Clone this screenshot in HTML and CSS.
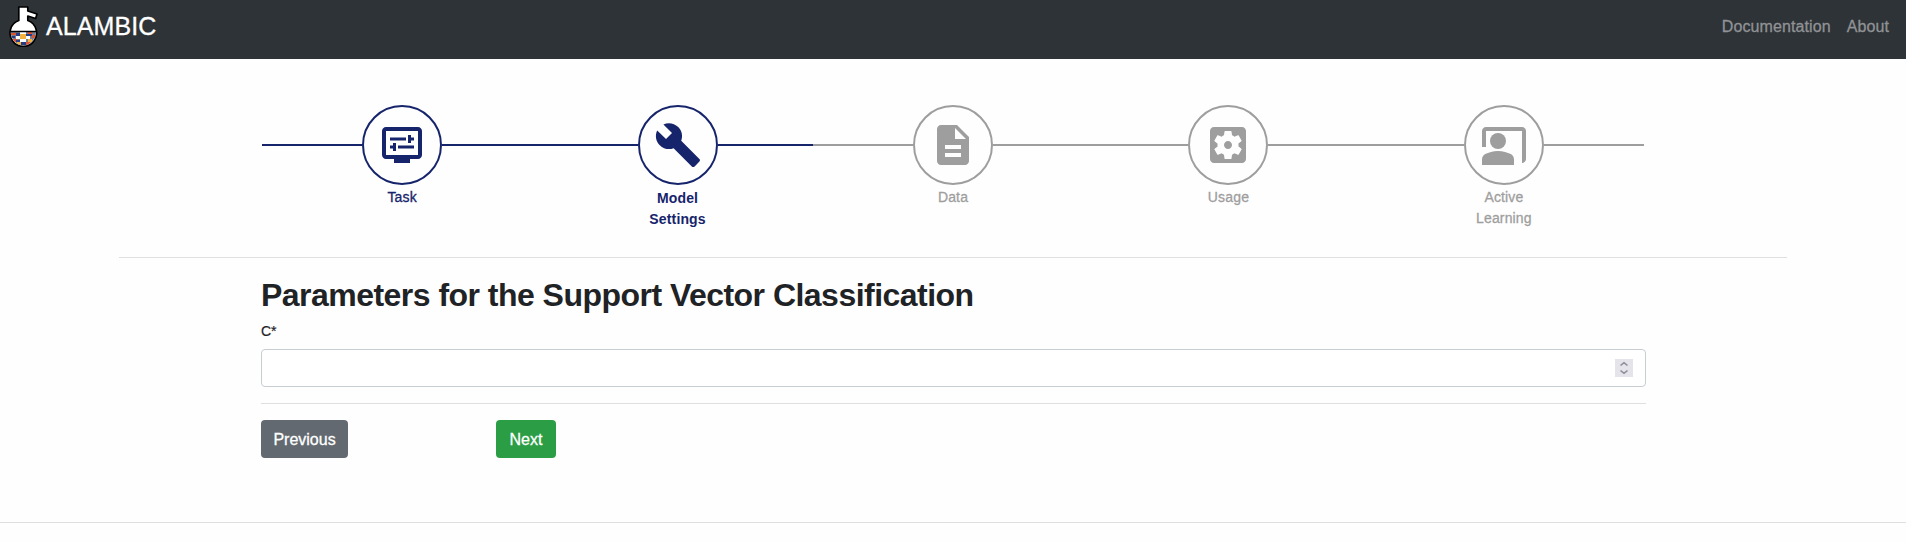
FILE: index.html
```html
<!DOCTYPE html>
<html lang="en">
<head>
<meta charset="utf-8">
<title>ALAMBIC</title>
<link rel="stylesheet" href="styles.css">
</head>
<body>
<nav class="navbar">
  <a class="brand">
    <svg class="logo" viewBox="0 0 30 42" width="30" height="42">
      <path d="M10.800 2h9v4l9.200 3-1.400 4.500-7.800-2.500v4.500a13.300 13.300 0 1 1-9 0z" fill="#fff" stroke="#000" stroke-width="1.700" stroke-linejoin="round"/>
      <clipPath id="bowl"><path d="M2.800 26.500h25a12.500 13.700 0 0 1-25 0z"/></clipPath>
      <g clip-path="url(#bowl)">
        <path fill="#777c8c" d="M1 26h28v16H1z"/>
        <path fill="#fff" d="M12 26h6v3h-6zM8 31h5v3H8zM18 31h4v3h-4zM12 34h6v3h-6z"/>
        <path fill="#e0522f" d="M3 28h5v2H3zM20 27h4v2h-4zM5 34h4v3H5zM18 37h4v3h-4zM24 30h3v3h-3z"/>
        <path fill="#f3b13e" d="M12 29h6v5h-6zM20 34h4v3h-4zM9 37h4v3H9z"/>
        <path fill="#263d85" d="M8 28h4v3H8zM3 31h4v2H3zM18 29h6v2h-6zM8 35h4v2H8zM13 37h5v3h-5z"/>
      </g>
      <path d="M2 26.500h26.500" stroke="#000" stroke-width="1.500"/>
    </svg>
    <span class="brand-name">ALAMBIC</span>
  </a>
  <div class="nav-links"><a class="doc">Documentation</a><a class="about">About</a></div>
</nav>
<main class="container">
  <div class="stepper">
    <span class="line end done"></span>
    <div class="step done">
      <div class="circle"><svg class="icon" viewBox="0 0 24 24"><path fill-rule="evenodd" d="M20 3H4c-1.100 0-2 .9-2 2v12c0 1.100.9 2 2 2h4v2h8v-2h4c1.100 0 2-.9 2-2V5c0-1.100-.9-2-2-2zM20 17H4V5h16z"/><path d="M6 8.250h8v1.500H6zM16.500 9.750H18v-1.500h-1.500V7H15v4h1.500zM10 12.250h8v1.500h-8zM7.500 15H9v-4H7.500v1.250H6v1.500h1.500z"/></svg></div>
      <div class="label">Task</div>
    </div>
    <span class="line done"></span>
    <div class="step done current">
      <div class="circle"><svg class="icon" viewBox="0 0 24 24"><path d="M22.700 19l-9.100-9.100c.9-2.300.4-5-1.500-6.900-2-2-5-2.400-7.400-1.300L9 6 6 9 1.600 4.700C.4 7.100.9 10.100 2.900 12.100c1.900 1.900 4.600 2.400 6.900 1.500l9.100 9.100c.4.4 1 .4 1.400 0l2.300-2.300c.5-.4.5-1.100.1-1.400z"/></svg></div>
      <div class="label">Model Settings</div>
    </div>
    <span class="line half"></span>
    <div class="step">
      <div class="circle"><svg class="icon" viewBox="0 0 24 24"><path d="M14 2H6c-1.100 0-1.990.9-1.990 2L4 20c0 1.100.89 2 1.990 2H18c1.100 0 2-.9 2-2V8l-6-6zm2 16H8v-2h8v2zm0-4H8v-2h8v2zm-3-5V3.500L18.500 9H13z"/></svg></div>
      <div class="label">Data</div>
    </div>
    <span class="line"></span>
    <div class="step">
      <div class="circle"><svg class="icon" viewBox="0 0 24 24"><path d="M12 10c-1.100 0-2 .9-2 2s.9 2 2 2 2-.9 2-2-.9-2-2-2zm7-7H5c-1.110 0-2 .9-2 2v14c0 1.100.89 2 2 2h14c1.110 0 2-.9 2-2V5c0-1.100-.89-2-2-2zm-1.750 9c0 .23-.02.46-.05.68l1.480 1.160c.13.11.17.3.08.45l-1.400 2.420c-.09.15-.27.21-.43.15l-1.740-.7c-.36.28-.76.51-1.180.69l-.26 1.850c-.03.17-.18.3-.35.3h-2.800c-.17 0-.32-.13-.35-.29l-.26-1.850c-.43-.18-.82-.41-1.180-.69l-1.740.7c-.16.06-.34 0-.43-.15l-1.400-2.420c-.09-.15-.05-.34.08-.45l1.480-1.160c-.03-.23-.05-.46-.05-.69 0-.23.02-.46.05-.68l-1.480-1.160c-.13-.11-.17-.3-.08-.45l1.400-2.420c.09-.15.27-.21.43-.15l1.740.7c.36-.28.76-.51 1.180-.69l.26-1.850c.03-.17.18-.3.35-.3h2.800c.17 0 .32.13.35.29l.26 1.850c.43.18.82.41 1.180.69l1.740-.7c.16-.06.34 0 .43.15l1.400 2.420c.09.15.05.34-.08.45l-1.480 1.160c.03.23.05.46.05.69z"/></svg></div>
      <div class="label">Usage</div>
    </div>
    <span class="line"></span>
    <div class="step">
      <div class="circle"><svg class="icon" viewBox="0 0 24 24"><path d="M21 3H3c-1.100 0-2 .9-2 2v8h2V5h18v16c1.100 0 2-.9 2-2V5c0-1.100-.9-2-2-2z"/><circle cx="9" cy="10" r="4"/><path d="M15.390 16.560C13.710 15.700 11.530 15 9 15s-4.710.7-6.390 1.560C1.610 17.070 1 18.100 1 19.220V22h16v-2.780c0-1.120-.61-2.150-1.610-2.660z"/></svg></div>
      <div class="label">Active Learning</div>
    </div>
    <span class="line end"></span>
  </div>
  <form class="params">
    <h2 class="title">Parameters for the Support Vector Classification</h2>
    <label class="field-label">C*</label>
    <div class="field">
      <svg class="spinner" viewBox="0 0 18 18" width="18" height="18"><path d="M5.500 6.500 9 3.700l3.500 2.800M5.500 11.500 9 14.300l3.500-2.800" fill="none" stroke="#8b8a97" stroke-width="1.600"/></svg>
    </div>
    <div class="actions">
      <button type="button" class="btn previous">Previous</button>
      <button type="button" class="btn next">Next</button>
    </div>
  </form>
</main>
<footer class="footer"></footer>
</body>
</html>
```
FILE: styles.css
```css
* { box-sizing: border-box; }
body {
  margin: 0;
  height: 543px;
  overflow: hidden;
  display: flex;
  flex-direction: column;
  background: #fefefe;
  color: #1f2326;
  font-family: "Liberation Sans", Arial, sans-serif;
}
.navbar {
  height: 59px;
  flex: none;
  display: flex;
  justify-content: space-between;
  background: #2e3337;
  padding: 5px 17px 0 8px;
}
.brand { display: flex; color: #fff; }
.brand-name { font-size: 25px; line-height: 42px; margin-left: 8px; letter-spacing: 0.1px; -webkit-text-stroke: 0.3px currentColor; }
.nav-links {
  display: flex;
  gap: 16px;
  color: #909295;
  font-size: 16px;
  line-height: 44px;
  letter-spacing: 0.1px;
  -webkit-text-stroke: 0.3px currentColor;
}
.container { width: 1668px; margin: 0 auto; height: 463px; flex: none; }
.stepper {
  height: 199px;
  padding: 46px 143.1px 0;
  display: flex;
  align-items: flex-start;
  border-bottom: 1px solid #dfdfdf;
}
.line { flex: 1; height: 2px; margin-top: 39px; background: #9e9e9e; }
.line.end { flex: 0 0 100px; }
.line.done { background: #16246c; }
.line.half { background: linear-gradient(to right, #16246c 95px, #9e9e9e 95px); }
.step { width: 80px; flex: none; color: #9e9e9e; }
.step.done { color: #16246c; }
.circle {
  width: 80px;
  height: 80px;
  border: 2px solid currentColor;
  border-radius: 50%;
  display: flex;
  align-items: center;
  justify-content: center;
}
.icon { width: 48px; height: 48px; fill: currentColor; }
.label {
  text-align: center;
  font-size: 14px;
  line-height: 21px;
  margin-top: 2px;
  letter-spacing: 0.15px;
  -webkit-text-stroke: 0.3px currentColor;
}
.current .label { font-weight: 700; margin-top: 3px; -webkit-text-stroke: 0; }
.params { margin: 0 141px 0 142px; }
.title {
  margin: 18px 0 7px;
  font-size: 32px;
  line-height: 38px;
  font-weight: 700;
  letter-spacing: -0.53px;
  white-space: nowrap;
}
.field-label { display: block; font-size: 14px; line-height: 21px; height: 28px; -webkit-text-stroke: 0.2px currentColor; }
.field {
  height: 38px;
  border: 1px solid #c8cdd2;
  border-radius: 4px;
  background: #fff;
  display: flex;
  align-items: center;
  justify-content: flex-end;
  padding-right: 12px;
}
.spinner { background: #e5e4ea; }
.actions { margin-top: 16px; border-top: 1px solid #dfdfdf; padding-top: 16px; display: flex; }
.btn {
  border: 0;
  border-radius: 4px;
  height: 38px;
  padding: 1px 0 0;
  color: #fff;
  font: 16px "Liberation Sans", Arial, sans-serif;
  -webkit-text-stroke: 0.3px currentColor;
}
.previous { width: 87px; background: #626970; margin-right: 148px; }
.next { width: 60px; background: #2a9d45; }
.footer { border-top: 1px solid #dfdfdf; flex: none; height: 21px; }
```
